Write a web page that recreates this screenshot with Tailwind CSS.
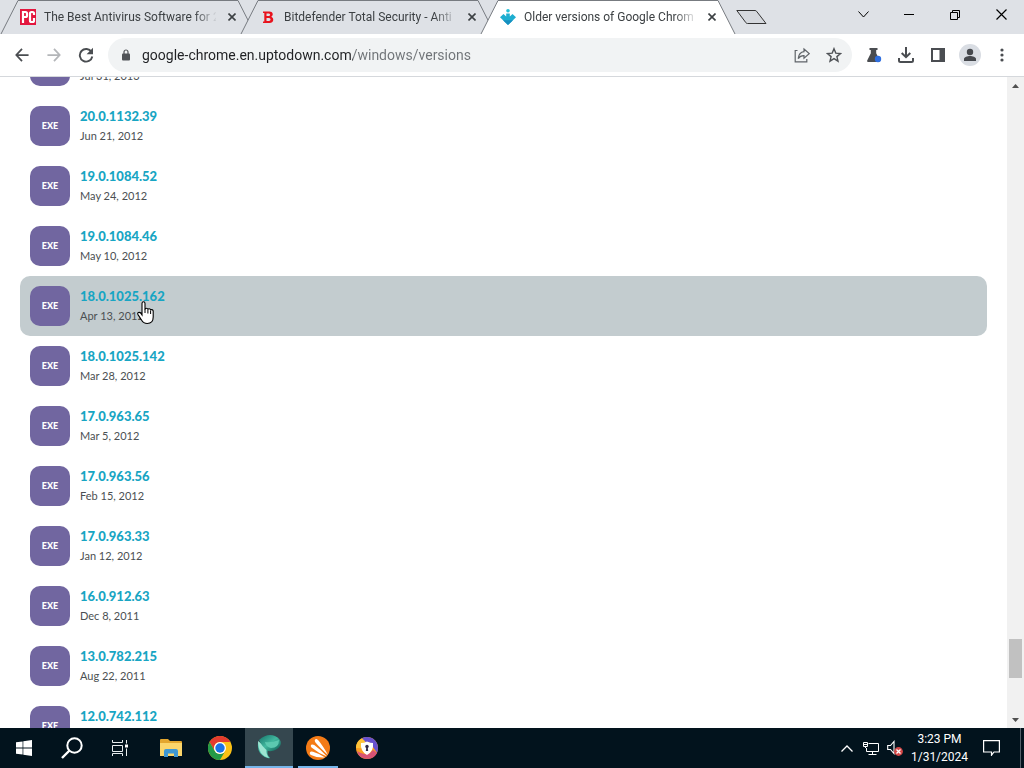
<!DOCTYPE html>
<html lang="en">
<head>
<meta charset="utf-8">
<meta name="viewport" content="width=device-width, initial-scale=1">
<title>Older versions of Google Chrome</title>
<script src="https://cdn.jsdelivr.net/npm/@tailwindcss/browser@4"></script>
</head>
<body class="flex h-screen flex-col overflow-hidden bg-white font-['Roboto','Noto_Sans',sans-serif] text-xs text-[#3c4043]">

<header class="shrink-0">
  <div class="flex h-[34px] items-stretch justify-between bg-[#dee1e6]">
    <div class="flex" role="tablist" aria-label="Tabs">
      <div class="relative flex w-[240px] items-center pl-5" role="tab">
        <svg class="absolute left-0 top-0 h-[34px] w-[256px]" viewBox="0 0 256 34" aria-hidden="true"><path d="M1 34L18 .5H238L255 34" fill="#dee1e6" stroke="#777b80"/></svg>
        <svg class="relative size-4 shrink-0" viewBox="0 0 16 16" aria-hidden="true"><path fill="#e3173e" d="M0 0h16v16H0z"/><path fill="none" stroke="#fff" stroke-width="2.200" d="M3 14V3h2.500q1.500 0 1.500 1.500v2q0 1.500-1.500 1.500H4M14 6V4.500Q14 3 12.500 3h-1Q10 3 10 4.500v7q0 1.500 1.500 1.500h1q1.500 0 1.500-1.500V9"/></svg>
        <span class="relative ml-2 w-[172px] whitespace-nowrap mask-[linear-gradient(90deg,#000_150px,transparent_174px)]">The Best Antivirus Software for 2</span>
        <button class="relative ml-2 grid size-4 place-items-center" aria-label="Close tab"><svg class="size-2" viewBox="0 0 8 8"><path d="M.5.5l7 7M7.500.5l-7 7" stroke="#3c4043" stroke-width="1.600"/></svg></button>
      </div>
      <div class="relative flex w-[240px] items-center pl-5" role="tab">
        <svg class="absolute left-0 top-0 h-[34px] w-[256px]" viewBox="0 0 256 34" aria-hidden="true"><path d="M1 34L18 .5H238L255 34" fill="#dee1e6" stroke="#777b80"/></svg>
        <svg class="relative size-4 shrink-0" viewBox="0 0 16 16" aria-hidden="true"><path fill="#e8131d" fill-rule="evenodd" d="M3 2.500h6.500c3.500 0 4.300 3.800 1.800 5.200 3.200 1.300 2.400 6.300-1.600 6.300H3v-1.500h1.300V4H3zM6.500 4.600V7H9c1.500 0 1.500-2.400 0-2.400zm0 4.300v3H9c2 0 2-3 0-3z"/></svg>
        <span class="relative ml-2 w-[172px] whitespace-nowrap mask-[linear-gradient(90deg,#000_150px,transparent_174px)]">Bitdefender Total Security - Anti</span>
        <button class="relative ml-2 grid size-4 place-items-center" aria-label="Close tab"><svg class="size-2" viewBox="0 0 8 8"><path d="M.5.5l7 7M7.500.5l-7 7" stroke="#3c4043" stroke-width="1.600"/></svg></button>
      </div>
      <div class="relative flex w-[240px] items-center pl-5" role="tab" aria-selected="true">
        <svg class="absolute left-0 top-0 h-[34px] w-[256px]" viewBox="0 0 256 34" aria-hidden="true"><path d="M1 34L18 .5H238L255 34" fill="#fff" stroke="#777b80"/></svg>
        <svg class="relative size-4 shrink-0" viewBox="0 0 16 16" aria-hidden="true"><circle cx="8" cy="1.800" r="1.800" fill="#22c0d8"/><path fill="#1eaed0" d="M6.200 4.500h3.600v3L12.500 5 16 8.300 8 16 0 8.300 3.500 5l2.700 2.500z"/><path fill="#168fc0" d="M3 11.200h10L8 16z"/></svg>
        <span class="relative ml-2 w-[172px] whitespace-nowrap mask-[linear-gradient(90deg,#000_150px,transparent_174px)]">Older versions of Google Chrom</span>
        <button class="relative ml-2 grid size-4 place-items-center" aria-label="Close tab"><svg class="size-2" viewBox="0 0 8 8"><path d="M.5.5l7 7M7.500.5l-7 7" stroke="#3c4043" stroke-width="1.600"/></svg></button>
      </div>
      <button class="ml-4 grid place-items-center" aria-label="New tab"><svg class="h-[14px] w-[31px]" viewBox="0 0 31 14"><path d="M.8.5H19q1 0 1.600.8L30 13.500H11.500q-1 0-1.600-.8z" fill="#d5d8dd" stroke="#333"/></svg></button>
    </div>
    <div class="flex h-[29px] text-black">
      <button class="grid w-[46px] place-items-center" aria-label="Search tabs"><svg class="h-[7px] w-[11px]" viewBox="0 0 11 7"><path d="M.5.5l5 5.500 5-5.500" fill="none" stroke="currentColor"/></svg></button>
      <button class="grid w-[46px] place-items-center" aria-label="Minimize"><svg class="h-px w-[10px]" viewBox="0 0 10 1"><path d="M0 0h10v1H0z"/></svg></button>
      <button class="grid w-[46px] place-items-center" aria-label="Restore"><svg class="size-[10px]" viewBox="0 0 10 10"><path d="M.5 2.500h7v7h-7zM2.500 2.500v-2h7v7h-2" fill="none" stroke="currentColor"/></svg></button>
      <button class="grid w-[46px] place-items-center" aria-label="Close"><svg class="size-[11px]" viewBox="0 0 11 11"><path d="M.5.5l10 10M10.500.5l-10 10" stroke="currentColor" stroke-width="1.200"/></svg></button>
    </div>
  </div>

  <div class="flex h-[43px] items-center border-b border-[#d5d8dc] bg-white px-[6px]">
    <button class="grid size-8 place-items-center" aria-label="Back"><svg class="size-[14px]" viewBox="0 0 16 16"><path d="M15.500 8H2M8 1L1.500 8 8 15" fill="none" stroke="#4a4d51" stroke-width="2"/></svg></button>
    <button class="grid size-8 place-items-center" aria-label="Forward"><svg class="size-[14px]" viewBox="0 0 16 16"><path d="M.5 8H14M8 1l6.500 7L8 15" fill="none" stroke="#b4b6b9" stroke-width="2"/></svg></button>
    <button class="grid size-8 place-items-center" aria-label="Reload"><svg class="size-4" viewBox="0 0 16 16"><path d="M13.500 5A6.300 6.300 0 1 0 14.300 9.500" fill="none" stroke="#4a4d51" stroke-width="1.900"/><path fill="#4a4d51" d="M15 .8v6.400H8.600z"/></svg></button>
    <div class="ml-[6px] flex h-[34px] flex-1 items-center rounded-full bg-[#f1f3f4] pl-[14px] pr-[2px]">
      <svg class="h-3 w-2 shrink-0" viewBox="0 0 8 12" aria-hidden="true"><path d="M2 5V3a2 2 0 0 1 4 0v2" fill="none" stroke="#505357" stroke-width="1.200"/><rect y="4.400" width="8" height="7.200" rx="1" fill="#505357"/></svg>
      <input type="text" aria-label="Address" value="google-chrome.en.uptodown.com/windows/versions" class="ml-3 min-w-0 flex-1 bg-[linear-gradient(90deg,#202124_211px,#6f7377_211px)] bg-clip-text text-sm text-transparent outline-none">
      <button class="grid size-8 place-items-center" aria-label="Share"><svg class="size-4" viewBox="0 0 16 16" fill="none" stroke="#5f6368" stroke-width="1.200"><path d="M3.500 3.500H1.200v11.300h11.600V12"/><path d="M10 2l5.200 4.600L10 11.200V8.600C7.500 8.500 5.700 9.300 4.200 11.600 4.600 7.500 6.500 5 10 4.600z"/></svg></button>
      <button class="grid size-8 place-items-center" aria-label="Bookmark this tab"><svg class="size-4" viewBox="0 0 16 16"><path d="M8 1.700l1.800 4.400 4.700.4-3.600 3.100 1.100 4.600-4-2.500-4 2.500 1.100-4.600L1.500 6.500l4.700-.4z" fill="none" stroke="#505357" stroke-width="1.400"/></svg></button>
    </div>
    <button class="ml-[6px] grid size-8 place-items-center" aria-label="Experiments"><svg class="size-4" viewBox="0 0 16 16"><path fill="#4a4d51" d="M3.500 1h8v2h-1.300v3.200l3.600 7.300q.6 1.300-.8 1.500H2q-1.400-.2-.8-1.500l3.600-7.300V3H3.500z"/><circle cx="12" cy="12" r="3.200" fill="#2f6fe0"/></svg></button>
    <button class="grid size-8 place-items-center" aria-label="Downloads"><svg class="size-4" viewBox="0 0 16 16" fill="none" stroke="#4a4d51" stroke-width="2"><path d="M8 0v10M3.700 6L8 10.200 12.300 6M1 11v2.500q0 1.500 1.500 1.500h11q1.500 0 1.500-1.500V11"/></svg></button>
    <button class="grid size-8 place-items-center" aria-label="Side panel"><svg class="size-[14px]" viewBox="0 0 14 14"><path fill="#4a4d51" fill-rule="evenodd" d="M0 0h14v14H0zM2 2v10h6.500V2z"/></svg></button>
    <button class="grid size-8 place-items-center" aria-label="Profile"><svg class="size-[22px]" viewBox="0 0 22 22"><circle cx="11" cy="11" r="11" fill="#d9dde3"/><circle cx="11" cy="8" r="3.200" fill="#45484d"/><path fill="#45484d" d="M5 17v-2c0-2 3.500-3 6-3s6 1 6 3v2z"/></svg></button>
    <button class="grid size-8 place-items-center" aria-label="Menu"><svg class="h-[14px] w-1" viewBox="0 0 4 14" fill="#4a4d51"><circle cx="2" cy="2" r="1.600"/><circle cx="2" cy="7" r="1.600"/><circle cx="2" cy="12" r="1.600"/></svg></button>
  </div>
</header>

<div class="flex min-h-0 flex-1">
  <main class="min-w-0 flex-1 overflow-hidden px-5 font-['Lato',sans-serif]">
    <ul id="versions" class="-mt-[41px]"></ul>
  </main>
  <div class="flex w-[17px] shrink-0 flex-col items-center justify-between bg-[#f1f1f1]" role="scrollbar" aria-label="Page scroll" aria-controls="versions" aria-valuenow="92">
    <button class="grid h-[17px] w-full place-items-center" aria-label="Scroll up"><svg class="h-1 w-[7px]" viewBox="0 0 7 4"><path fill="#505050" d="M0 4L3.500 0 7 4z"/></svg></button>
    <div class="flex w-full flex-1 flex-col items-center justify-end pb-[33px]"><div class="h-[39px] w-[13px] bg-[#c1c1c1]"></div></div>
    <button class="grid h-[17px] w-full place-items-center" aria-label="Scroll down"><svg class="h-1 w-[7px]" viewBox="0 0 7 4"><path fill="#505050" d="M0 0L3.500 4 7 0z"/></svg></button>
  </div>
</div>

<footer class="flex h-10 shrink-0 items-stretch justify-between bg-[#02131d] text-white">
  <nav class="flex" aria-label="Taskbar">
    <button class="grid w-12 place-items-center" aria-label="Start"><svg class="size-4" viewBox="0 0 16 16" fill="#fff"><path d="M0 2.300l6.600-.9v6.200H0zM7.300 1.300L16 0v7.600H7.300zM0 8.400h6.600v6.200L0 13.700zM7.300 8.400H16V16l-8.700-1.300z"/></svg></button>
    <button class="grid w-12 place-items-center" aria-label="Search"><svg class="size-[22px]" viewBox="0 0 22 22" fill="none" stroke="#fff" stroke-width="2"><circle cx="13.500" cy="8.500" r="7.200"/><path d="M8.500 13.500L1 21" stroke-width="2.400"/></svg></button>
    <button class="grid w-12 place-items-center" aria-label="Task view"><svg class="size-4" viewBox="0 0 16 16" fill="none" stroke="#e8edf0"><path d="M.5 0v2.500h10V0M.5 5.500h10v6H.5zM.5 16v-2.500h10V16M14.500 0v3.500M14.500 8.500V16"/><path d="M13 4.500h3v3h-3z" fill="#fff" stroke="none"/></svg></button>
    <button class="grid w-[53px] place-items-center" aria-label="File Explorer"><svg class="h-[18px] w-[22px]" viewBox="0 0 22 18"><path fill="#e3a62e" d="M0 1q0-1 1-1h7l2 2h11q1 0 1 1v4H0z"/><path fill="#fbd56b" d="M0 4h22v13H0z"/><path fill="#3f97d3" d="M4 18v-6q0-2 2-2h10q2 0 2 2v6h-4v-3.500H8V18z"/></svg></button>
    <button class="mr-[2px] grid w-[46px] place-items-center" aria-label="Google Chrome"><svg class="size-6" viewBox="0 0 24 24"><circle cx="12" cy="12" r="12" fill="#fbc116"/><path fill="#e33b2e" d="M1.600 6A12 12 0 0 1 22.400 6H12a6 6 0 0 0-5.200 9z"/><path fill="#249a48" d="M1.600 6A12 12 0 0 0 12 24l5.200-9A6 6 0 0 1 6.800 15z"/><circle cx="12" cy="12" r="6" fill="#fff"/><circle cx="12" cy="12" r="4.700" fill="#1a73e8"/></svg></button>
    <button class="flex w-12 flex-col items-center border-b-2 border-[#76b5ea] bg-[#35474f] pt-[7px]" aria-label="Security browser"><svg class="size-6" viewBox="0 0 24 24"><defs><linearGradient id="teal" x2="1" y2="1"><stop stop-color="#15736a"/><stop offset=".5" stop-color="#42b99f"/><stop offset="1" stop-color="#0b5750"/></linearGradient></defs><path fill="#43bba4" d="M1 7q-1 9 4 13 4 4 8 3-4-4-2-9z"/><path fill="#9ce5d2" d="M1 6q5 4 9 7-2 5 2 10-5-1-8-5Q1 13 1 6z"/><path fill="url(#teal)" d="M2 5Q10-2 18 1q8 4 5 10-4 6-12 5Q5 12 2 5z"/><path fill="#5cc9b0" d="M8 7q6 1 14-2 0 8-8 8-5-1-6-6z"/></svg></button>
    <button class="ml-[5px] flex w-10 flex-col items-center border-b-2 border-[#76b5ea] pt-2" aria-label="Avast"><svg class="size-6" viewBox="0 0 24 24"><circle cx="12" cy="12" r="12" fill="#f47b16"/><g fill="#fff"><path d="M22 19Q14 12 9.500 6.500 8 4 9.500 3.200T12.500 4.500Q17 10 22 19z"/><path d="M21 20.500Q12 17 5.500 11.500q-1.500-1.800-.3-2.700t3 .3Q15 14 21 20.500z"/><path d="M19 21.500q-8 .5-14-2.500-1.800-1-1.100-2.500t3.100-.8q6.500 1.800 12 5.800z"/></g></svg></button>
    <button class="ml-[5px] grid w-12 place-items-center" aria-label="Secure Browser"><svg class="size-[22px]" viewBox="0 0 22 22"><circle cx="11" cy="11" r="11" fill="#fb9d22"/><path fill="#6751cf" d="M6 1.200A11 11 0 0 1 22 11q0 3-1 4.800L17 10q-1-5-6-5-3 0-5 2z"/><path fill="#d85375" d="M1 14q2 8 11 8 7-1 9-6l-4-3q-6 8-16 1z"/><path fill="#ffc338" d="M0 11Q0 4 6 1.200l4 4q-5 1-5 6z"/><path fill="#fff" d="M11 4.500q3 1.500 6 1.500 1 8-6 12Q4 14 5 6q3 0 6-1.500z"/><circle cx="11" cy="9.500" r="1.700" fill="#322a47"/><path fill="#322a47" d="M10.300 10h1.400l.5 4h-2.400z"/></svg></button>
  </nav>
  <div class="flex items-center">
    <button class="grid h-full w-6 place-items-center" aria-label="Show hidden icons"><svg class="h-[7px] w-3" viewBox="0 0 12 7"><path d="M.5 6.500L6 1l5.500 5.500" fill="none" stroke="#fff" stroke-width="1.300"/></svg></button>
    <button class="grid h-full w-6 place-items-center" aria-label="Network"><svg class="h-[14px] w-4" viewBox="0 0 16 14" fill="none" stroke="#fff"><path d="M5.500 2.500h10v8h-12V7M9.500 10.500v3M5.500 13.500h8M.5 1.500h4v4h-4zM2.500 5.500V7M.5 3.500h4"/></svg></button>
    <button class="grid h-full w-6 place-items-center" aria-label="Volume muted"><svg class="h-[16px] w-4" viewBox="0 0 16 16"><path d="M.7 5.500h2.800l3.500-4v12l-3.500-4H.7z" fill="none" stroke="#fff" stroke-width="1.100"/><circle cx="11.500" cy="11.500" r="4.400" fill="#d34747"/><path d="M9.500 9.500l4 4M13.500 9.500l-4 4" stroke="#fff" stroke-width="1.300"/></svg></button>
    <button class="w-[65px] text-center text-xs leading-[18px]"><time class="block">3:23 PM</time><time class="block">1/31/2024</time></button>
    <button class="grid h-full w-[38px] place-items-center" aria-label="Notifications"><svg class="h-4 w-[17px]" viewBox="0 0 17 16"><path d="M.6.600h15.800v11.400h-5.400L8.500 15.200V12H.6z" fill="none" stroke="#fff" stroke-width="1.200"/></svg></button>
    <button class="ml-[10px] h-full w-1 border-l border-[#54616a]" aria-label="Show desktop"></button>
  </div>
</footer>

<svg class="pointer-events-none absolute left-[137px] top-[301px] h-[24px] w-[18px]" viewBox="0 0 18 24" aria-hidden="true"><path d="M5 14V2.500Q5 .8 6.500.8T8 2.500v6q.2-1.200 1.400-1.200T10.900 8.700q.2-1 1.400-.9t1.300 1.400q.3-.8 1.300-.6T16.200 10v6q0 6.500-6 6.500-3.700 0-5.700-3.500L1 13.600q-.8-1.400.4-2T3.600 12z" fill="#fff" stroke="#000" stroke-width="1.100"/><path d="M8 8v4M10.900 9v3.500M13.600 9.500V13" stroke="#000"/></svg>

<script>
const versions = [
  ['20.0.1132.47', 'Jul 31, 2013'], ['20.0.1132.39', 'Jun 21, 2012'],
  ['19.0.1084.52', 'May 24, 2012'], ['19.0.1084.46', 'May 10, 2012'],
  ['18.0.1025.162', 'Apr 13, 2012'], ['18.0.1025.142', 'Mar 28, 2012'],
  ['17.0.963.65', 'Mar 5, 2012'], ['17.0.963.56', 'Feb 15, 2012'],
  ['17.0.963.33', 'Jan 12, 2012'], ['16.0.912.63', 'Dec 8, 2011'],
  ['13.0.782.215', 'Aug 22, 2011'], ['12.0.742.112', 'Jul 1, 2011']
];
document.getElementById('versions').innerHTML = versions.map(([version, date], i) => `
  <li class="${i === 4 ? 'rounded-[10px] bg-[#c3cccf]' : ''}">
    <a href="#" class="flex h-[60px] items-center gap-[10px] px-[10px]">
      <span class="grid size-10 shrink-0 place-items-center rounded-[10px] bg-[#7166a0] text-[9px] font-black text-white">EXE</span>
      <span class="flex flex-col leading-5">
        <span class="text-[13px] font-black text-[#18a5c3]">${version}</span>
        <span class="text-[11px] text-[#4b4f52]">${date}</span>
      </span>
    </a>
  </li>`).join('');
</script>
</body>
</html>
